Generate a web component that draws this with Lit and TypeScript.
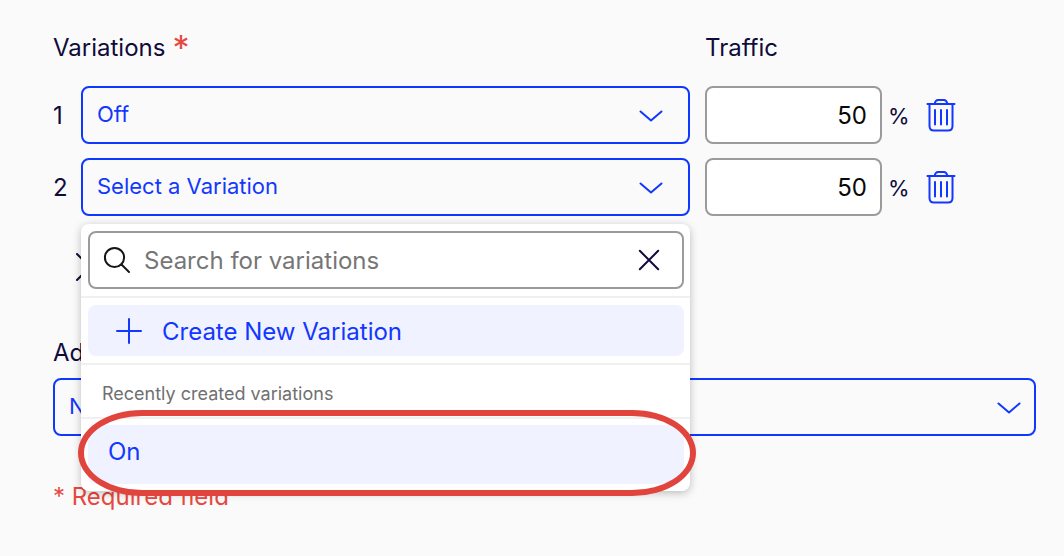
import { LitElement, html, css } from "lit";
import { customElement, property, state } from "lit/decorators.js";

const chevron = html`<svg class="chevron" width="24" height="14" viewBox="0 0 24 14" aria-hidden="true">
  <path d="M1.5 2.5 L12 11.5 L22.5 2.5" />
</svg>`;

const cross = html`<svg class="cross" width="24" height="24" viewBox="0 0 24 24" aria-hidden="true">
  <path d="M2.8 2.8 L21.2 21.2 M21.2 2.8 L2.8 21.2" />
</svg>`;

const base = css`
  * {
    box-sizing: border-box;
  }
  button,
  input,
  select {
    font: inherit;
    margin: 0;
  }
  svg {
    display: block;
    fill: none;
    stroke: currentColor;
    stroke-width: 2;
    stroke-linecap: round;
    stroke-linejoin: round;
  }
`;

@customElement("drop-down")
export class DropDown extends LitElement {
  @property() label = "";
  @property() value = "";

  static styles = [
    base,
    css`
      :host {
        display: grid;
        align-items: center;
        color: #1237ff;
      }
      .field {
        grid-area: 1 / 1;
        width: 100%;
        height: 58px;
        padding: 0 56px 2px 14px;
        border: 2px solid #0f38ff;
        border-radius: 8px;
        background: transparent;
        color: inherit;
        font-size: 22px;
        appearance: none;
      }
      .chevron {
        grid-area: 1 / 1;
        justify-self: end;
        margin: 2px var(--chevron-inset, 27px) 0 0;
        pointer-events: none;
      }
    `,
  ];

  render() {
    return html`<select class="field" aria-label=${this.label}>
        <option>${this.value}</option>
      </select>
      ${chevron}`;
  }
}

@customElement("variation-menu")
export class VariationMenu extends LitElement {
  @state() items = ["On"];

  static styles = [
    base,
    css`
      :host {
        display: block;
        background: #fff;
        border-radius: 8px;
        box-shadow: 0 2px 8px rgba(0, 0, 0, 0.25);
      }
      .section {
        padding: 7px 6px 7px 7px;
        border-bottom: 2px solid #f0f0f0;
      }
      .search {
        display: flex;
        align-items: center;
        height: 58px;
        padding: 0 21px 0 13px;
        border: 2px solid #9b9b9b;
        border-radius: 8px;
      }
      .glass {
        color: #151515;
      }
      .query {
        flex: 1;
        min-width: 0;
        padding: 2px 0 0 13px;
        border: 0;
        outline: 0;
        background: transparent;
        font-size: 24px;
      }
      .query::placeholder {
        color: #767676;
        opacity: 1;
      }
      .clear {
        padding: 0;
        border: 0;
        background: none;
        color: #100b3b;
      }
      .create {
        display: flex;
        align-items: center;
        gap: 19px;
        width: 100%;
        height: 51px;
        padding: 0 27px;
        border: 0;
        border-radius: 8px;
        background: #f0f2ff;
        color: #1237ff;
        font-size: 24px;
      }
      .create-label {
        padding-top: 2px;
      }
      .caption {
        padding: 17px 21px 11px;
        border-bottom: 2px solid #f0f0f0;
        color: #707070;
        font-size: 18px;
        line-height: 24px;
      }
      .list {
        margin: 0;
        padding: 6px 6px 7px 7px;
        list-style: none;
      }
      .item {
        position: relative;
      }
      .choice {
        display: block;
        width: 100%;
        height: 59px;
        padding: 0 20px 6px;
        border: 0;
        border-radius: 8px;
        background: #f0f2ff;
        color: #1237ff;
        font-size: 24px;
        text-align: left;
      }
      .ring {
        position: absolute;
        inset: -15px -12px -12px -10px;
        border: 6px solid #e0443c;
        border-radius: 64px / 50%;
        pointer-events: none;
      }
    `,
  ];

  render() {
    return html`
      <div class="section">
        <div class="search">
          <svg class="glass" width="28" height="28" viewBox="0 0 28 28" aria-hidden="true">
            <circle cx="11.5" cy="11.5" r="9.6" />
            <path d="M18.5 18.5 L26 26" />
          </svg>
          <input class="query" type="text" aria-label="Search for variations" placeholder="Search for variations" />
          <button class="clear" aria-label="Clear search">${cross}</button>
        </div>
      </div>
      <div class="section">
        <button class="create">
          <svg width="28" height="28" viewBox="0 0 28 28" aria-hidden="true">
            <path d="M14 2 V26 M2 14 H26" />
          </svg>
          <span class="create-label">Create New Variation</span>
        </button>
      </div>
      <div class="caption">Recently created variations</div>
      <ul class="list">
        ${this.items.map(
          (name) => html`<li class="item">
            <button class="choice">${name}</button>
            <span class="ring"></span>
          </li>`
        )}
      </ul>
    `;
  }
}

@customElement("app-root")
export class AppRoot extends LitElement {
  @state() rows = [
    { name: "Off", traffic: 50, open: false },
    { name: "Select a Variation", traffic: 50, open: true },
  ];

  static styles = [
    base,
    css`
      :host {
        display: block;
        min-height: 100vh;
        box-sizing: border-box;
        padding: 32px 28px 24px 53px;
        background: #fafafa;
        color: #100b3b;
        font-family: Inter, "Liberation Sans", sans-serif;
        font-size: 24px;
        line-height: 32px;
      }
      .columns {
        display: grid;
        grid-template-columns: 28px minmax(0, 1fr) 177px 18px 136px;
        align-items: center;
      }
      .head {
        margin-bottom: 22px;
      }
      .title {
        grid-column: 1 / 3;
        display: flex;
        gap: 7px;
      }
      .star {
        color: #e8483f;
        font-size: 34px;
      }
      .rows {
        display: grid;
        gap: 14px;
      }
      .number {
        padding-top: 2px;
      }
      .cell {
        position: relative;
        margin-right: 15px;
      }
      .menu {
        position: absolute;
        z-index: 1;
        top: calc(100% + 8px);
        left: 0;
        right: 0;
      }
      .traffic {
        width: 100%;
        height: 58px;
        padding: 0 13px;
        border: 2px solid #9b9b9b;
        border-radius: 8px;
        background: #fff;
        color: #080808;
        font-size: 24px;
        text-align: right;
      }
      .percent {
        padding: 2px 0 0 6px;
        font-size: 22px;
      }
      .remove {
        justify-self: start;
        margin-left: 25px;
        padding: 0;
        border: 0;
        background: none;
        color: #1237ff;
      }
      .more {
        display: block;
        margin: 35px 0 0 21px;
        padding: 0;
        border: 0;
        background: none;
        color: inherit;
      }
      .caption {
        display: block;
        margin: 54px 0 9px;
      }
      .wide {
        --chevron-inset: 15px;
      }
      .required {
        margin: 45px 0 0;
        color: #e8483f;
      }
    `,
  ];

  render() {
    return html`
      <div class="columns head">
        <span class="title">Variations <span class="star">*</span></span>
        <span>Traffic</span>
      </div>
      <div class="rows">
        ${this.rows.map(
          (row, i) => html`<div class="columns">
            <span class="number">${i + 1}</span>
            <div class="cell">
              <drop-down label="Variation ${i + 1}" value=${row.name}></drop-down>
              ${row.open ? html`<variation-menu class="menu"></variation-menu>` : null}
            </div>
            <input class="traffic" type="text" inputmode="numeric" aria-label="Traffic ${i + 1}" .value=${String(row.traffic)} />
            <span class="percent">%</span>
            <button class="remove" aria-label="Remove variation ${i + 1}">
              <svg width="32" height="34" viewBox="0 0 32 34" aria-hidden="true">
                <path d="M2.5 6 H29.5 M4.5 6 V28 Q4.5 32.5 9 32.5 H23 Q27.5 32.5 27.5 28 V6" />
                <path d="M9.5 6 Q10.5 2 13 2 H19 Q21.5 2 22.5 6" />
                <path d="M10 12 V26.5 M16 12 V26.5 M22 12 V26.5" />
              </svg>
            </button>
          </div>`
        )}
      </div>
      <button class="more" aria-label="Close">
        <svg width="32" height="32" viewBox="0 0 32 32" aria-hidden="true">
          <path d="M3 3 L29 29 M29 3 L3 29" />
        </svg>
      </button>
      <span class="caption">Ad</span>
      <drop-down class="wide" label="Ad" value="None"></drop-down>
      <p class="required">* Required field</p>
    `;
  }
}
